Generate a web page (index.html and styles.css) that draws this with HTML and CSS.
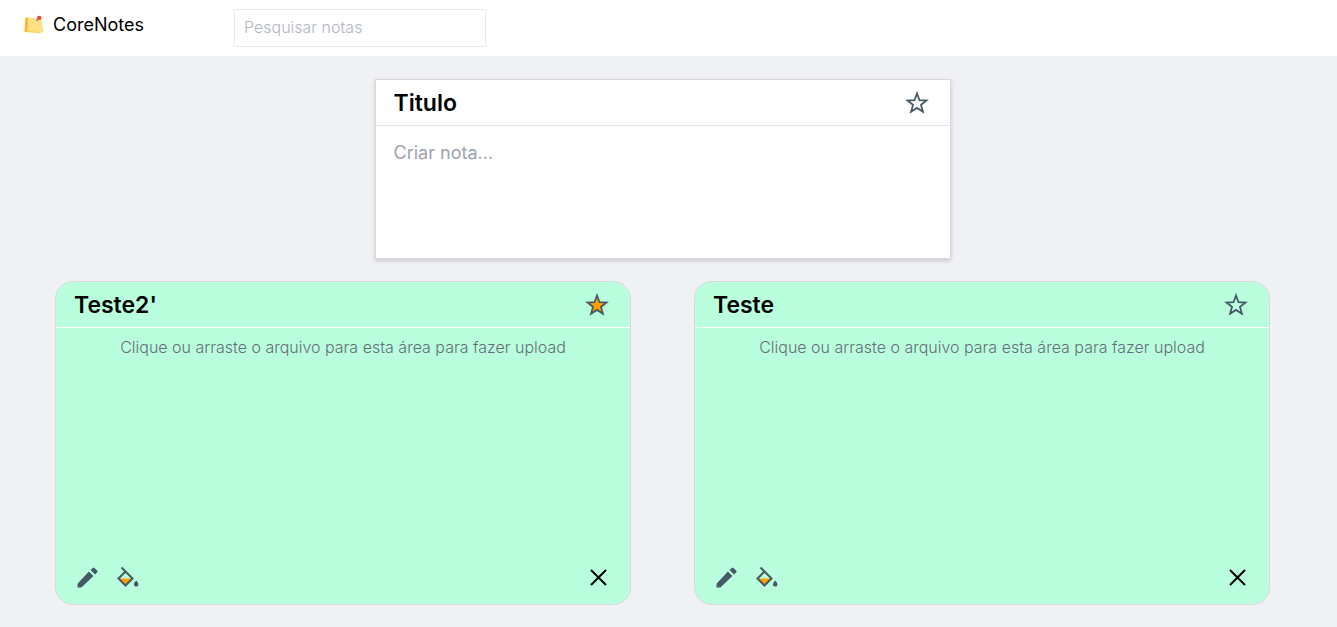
FILE: index.html
```html
<!DOCTYPE html>
<html lang="pt-BR">
<head>
<meta charset="utf-8">
<meta name="viewport" content="width=device-width, initial-scale=1">
<title>CoreNotes</title>
<link rel="stylesheet" href="styles.css">
</head>
<body>
<svg class="symbols" aria-hidden="true">
  <symbol id="star" viewBox="0 0 24 24"><path d="M12 2.500 L14.500 9.200 L21.500 9.500 L16 13.900 L17.900 20.800 L12 16.900 L6.100 20.800 L8 13.900 L2.500 9.500 L9.500 9.200 Z" stroke="#455a64" stroke-width="1.800"/></symbol>
  <symbol id="pencil" viewBox="0 0 24 24"><path fill="#455a64" d="M2.500 17.800V21.500h3.900L18.400 10.100l-4.500-4.500ZM22.300 6.300a1.100 1.100 0 0 0 0-1.600L19.500 1.900a1.100 1.100 0 0 0-1.600 0L15.500 4.100 20 8.600Z"/></symbol>
  <symbol id="bucket" viewBox="0 0 24 24"><path fill="#ffa000" d="M4 12.500H17l-6.500 7Z"/><path fill="none" stroke="#455a64" stroke-width="2" d="M6.500 1.500 17.500 12.500 10.500 19.500 3.500 12.500 10.500 5.500"/><path fill="#455a64" d="M21.200 14.500s-2.200 2.300-2.200 3.900a2.200 2.200 0 0 0 4.400 0C23.400 16.800 21.200 14.500 21.200 14.500Z"/></symbol>
  <symbol id="close" viewBox="0 0 24 24"><path fill="none" stroke="#000" stroke-width="2" d="m5 4 15 15M20 4 5 19"/></symbol>
</svg>
<header class="topbar">
  <a class="brand" href="#">
    <svg class="logo" viewBox="0 0 22 20" aria-hidden="true">
      <path fill="#ffb52e" d="M1.500 2.500 5 2 4 17.500 0.500 17Z"/>
      <path fill="#ffe082" d="M4 2.500 18 3 20.500 16.500 18 18 4 17Z"/>
      <path fill="#ffca52" d="M3.500 16 17 17.500 18 18 16 18.500 3.500 17.500Z"/>
      <path stroke="#78909c" stroke-width="1.500" d="m13 6 2-3"/>
      <circle cx="16" cy="2.500" r="2.300" fill="#f44336"/>
    </svg>
    <span>CoreNotes</span>
  </a>
  <input class="search" type="search" placeholder="Pesquisar notas" aria-label="Pesquisar notas">
</header>
<main class="page">
  <form class="composer">
    <div class="note-head">
      <input class="note-title title-input" type="text" placeholder="Titulo" aria-label="Titulo">
      <button class="icon-button" type="button" aria-label="Favoritar"><svg class="icon"><use href="#star"/></svg></button>
    </div>
    <textarea class="composer-text" placeholder="Criar nota..." aria-label="Criar nota"></textarea>
  </form>
  <section class="notes" aria-label="Notas">
    <article class="note">
      <div class="note-head">
        <h2 class="note-title">Teste2'</h2>
        <button class="icon-button favorite" type="button" aria-label="Remover favorito"><svg class="icon"><use href="#star"/></svg></button>
      </div>
      <p class="note-text">Clique ou arraste o arquivo para esta área para fazer upload</p>
      <div class="note-actions">
        <button class="icon-button" type="button" aria-label="Editar"><svg class="icon"><use href="#pencil"/></svg></button>
        <button class="icon-button" type="button" aria-label="Mudar cor"><svg class="icon"><use href="#bucket"/></svg></button>
        <button class="icon-button remove" type="button" aria-label="Excluir"><svg class="icon"><use href="#close"/></svg></button>
      </div>
    </article>
    <article class="note">
      <div class="note-head">
        <h2 class="note-title">Teste</h2>
        <button class="icon-button" type="button" aria-label="Favoritar"><svg class="icon"><use href="#star"/></svg></button>
      </div>
      <p class="note-text">Clique ou arraste o arquivo para esta área para fazer upload</p>
      <div class="note-actions">
        <button class="icon-button" type="button" aria-label="Editar"><svg class="icon"><use href="#pencil"/></svg></button>
        <button class="icon-button" type="button" aria-label="Mudar cor"><svg class="icon"><use href="#bucket"/></svg></button>
        <button class="icon-button remove" type="button" aria-label="Excluir"><svg class="icon"><use href="#close"/></svg></button>
      </div>
    </article>
  </section>
</main>
</body>
</html>
```
FILE: styles.css
```css
* { box-sizing: border-box; }
body {
  margin: 0;
  min-height: 100vh;
  background: #f0f1f5;
  color: #000;
  font-family: Inter, "Liberation Sans", sans-serif;
}
input, textarea, button { font: inherit; color: inherit; }
.symbols { display: none; }
.topbar {
  display: flex;
  align-items: center;
  height: 56px;
  padding: 0 24px;
  background: #fff;
}
.brand {
  display: flex;
  align-items: center;
  gap: 8px;
  width: 210px;
  padding-bottom: 7px;
  color: #000;
  font-size: 18px;
  text-decoration: none;
}
.logo { width: 21px; height: 20px; }
.search {
  width: 252px;
  height: 38px;
  padding: 0 9px 2px;
  border: 1px solid #e8e9ee;
  border-radius: 2px;
  background: #fff;
  font-size: 16px;
  font-weight: 350;
  appearance: none;
}
.search::placeholder { color: #b3b6c0; }
.page {
  display: flex;
  flex-direction: column;
  gap: 22px;
  padding: 23px 67px 22px 55px;
}
.composer {
  width: 100%;
  max-width: 576px;
  margin: 0 auto;
  border: 1px solid #d9d9d9;
  background: #fff;
  box-shadow: 0 2px 4px rgba(0, 0, 0, 0.16);
}
.note-head {
  display: flex;
  align-items: center;
  justify-content: space-between;
  height: 46px;
  padding: 0 21px 0 18px;
  border-bottom: 1px solid #e4e4e4;
}
.note-title {
  margin: 0;
  font-size: 23px;
  font-weight: 600;
  line-height: 28px;
}
.title-input {
  flex: 1;
  min-width: 0;
  padding: 0;
  border: 0;
  background: transparent;
}
.title-input::placeholder { color: #000; }
.composer-text {
  display: block;
  width: 100%;
  height: 132px;
  padding: 15px 18px;
  border: 0;
  background: transparent;
  font-size: 18px;
  line-height: 24px;
  resize: none;
}
.composer-text::placeholder { color: #9ca3af; }
.notes {
  display: grid;
  grid-template-columns: repeat(auto-fit, minmax(320px, 1fr));
  gap: 63px;
}
.note {
  display: flex;
  flex-direction: column;
  min-height: 324px;
  border: 1px solid #d9d9d9;
  border-radius: 18px;
  background: #b9ffdd;
}
.note .note-head { border-color: #fff; }
.note-text {
  margin: 7px 18px;
  color: #666d7a;
  font-size: 16px;
  font-weight: 350;
  line-height: 24px;
  text-align: center;
}
.note-actions {
  display: flex;
  gap: 16px;
  margin-top: auto;
  padding: 0 20px 14px 19px;
}
.icon-button {
  display: flex;
  padding: 0;
  border: 0;
  background: none;
  cursor: pointer;
}
.icon { width: 24px; height: 24px; fill: none; }
.favorite .icon { fill: #ffa000; }
.remove { margin-left: auto; }
```
